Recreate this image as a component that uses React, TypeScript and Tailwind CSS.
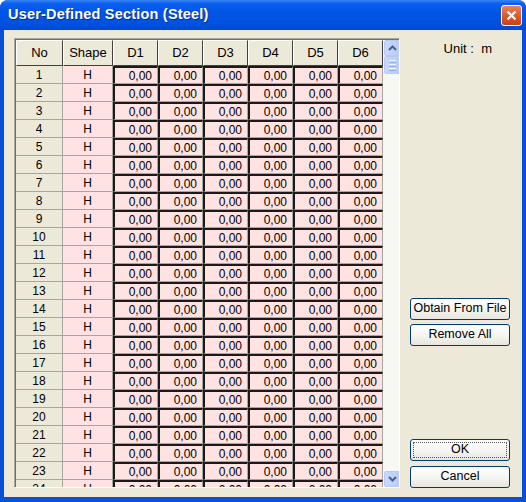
import React from "react";

const ROWS = Array.from({ length: 24 }, (_, i) => i + 1);
const D_COLS = ["D1", "D2", "D3", "D4", "D5", "D6"];

function HeaderCell({ label, w }: { label: string; w: string }) {
  return (
    <div
      className={`${w} h-[26px] shrink-0 flex items-center justify-center bg-[#ece9d8] border-t border-l border-t-white border-l-white border-r border-b border-r-[#404040] border-b-[#404040] text-[13px] text-black`}
    >
      {label}
    </div>
  );
}

function DataRow({ n }: { n: number }) {
  return (
    <div className="flex h-[18px] shrink-0">
      <div className="w-[47px] shrink-0 flex items-center justify-center bg-[#ece9d8] border-r border-b border-[#a7a69e] text-[12px]">
        {n}
      </div>
      <div className="w-[50px] shrink-0 flex items-center justify-center bg-[#ffe3e3] border-r border-b border-[#a7a69e] text-[12px]">
        H
      </div>
      {D_COLS.map((d) => (
        <div
          key={d}
          className="w-[45px] shrink-0 flex items-center justify-end pr-[5px] bg-[#ffe3e3] border-l-2 border-t-2 border-l-[#1a1a1a] border-t-[#1a1a1a] border-r border-b border-r-[#a7a69e] border-b-[#a7a69e] text-[12px]"
        >
          0,00
        </div>
      ))}
    </div>
  );
}

function ScrollButton({ dir }: { dir: "up" | "down" }) {
  return (
    <div className="w-[16px] h-[16px] rounded-[2px] border border-[#b7c8f5] bg-[linear-gradient(to_right,#c9d8fc,#b9cbf8)] flex items-center justify-center">
      <svg width="9" height="6" viewBox="0 0 9 6">
        <path
          d={dir === "up" ? "M1 5 L4.5 1.5 L8 5" : "M1 1 L4.5 4.5 L8 1"}
          fill="none"
          stroke="#4d6185"
          strokeWidth="2"
        />
      </svg>
    </div>
  );
}

function XpButton({ label, focus }: { label: string; focus?: boolean }) {
  return (
    <button
      type="button"
      className="w-[100px] h-[22px] rounded-[3px] border border-[#003c74] bg-[linear-gradient(to_bottom,#ffffff,#f3f3ef_60%,#e6e5de)] text-[12.5px] text-black whitespace-nowrap flex items-center justify-center p-[2px]"
    >
      <span
        className={`w-full h-full flex items-center justify-center ${
          focus ? "border border-dotted border-[#555]" : ""
        }`}
      >
        {label}
      </span>
    </button>
  );
}

export default function App() {
  return (
    <div
      className="w-[526px] h-[502px] flex flex-col bg-[#0a4fd8] rounded-t-[8px] overflow-hidden"
      style={{ fontFamily: '"Liberation Sans", Arial, sans-serif' }}
    >
      {/* title bar */}
      <div className="h-[30px] shrink-0 flex items-center justify-between pl-[8px] pr-[4px] bg-[linear-gradient(to_bottom,#3a86f5_0%,#0a5ff0_12%,#0055e5_40%,#0053e1_75%,#0048d6_100%)]">
        <span className="text-white font-bold text-[14.5px] tracking-[0.2px] [text-shadow:1px_1px_0_#0a2a8a]">
          User-Defined Section (Steel)
        </span>
        <div className="w-[21px] h-[21px] rounded-[3px] border border-white bg-[linear-gradient(to_bottom,#e8825c,#d9532c_60%,#c8401c)] flex items-center justify-center">
          <svg width="11" height="11" viewBox="0 0 11 11">
            <path d="M1.5 1.5 L9.5 9.5 M9.5 1.5 L1.5 9.5" stroke="white" strokeWidth="2.2" />
          </svg>
        </div>
      </div>

      {/* body */}
      <div className="flex-1 mx-[4px] mb-[5px] bg-[#ece9d8] flex pt-[8px] pl-[10px]">
        {/* grid */}
        <div className="w-[386px] h-[450px] shrink-0 border-t border-l border-t-[#aca899] border-l-[#aca899] border-b border-r border-b-white border-r-white">
          <div className="w-full h-full flex border-t border-l border-t-[#716f64] border-l-[#716f64] bg-[#ffffff] overflow-hidden">
            <div className="w-[367px] shrink-0 flex flex-col overflow-hidden">
              <div className="flex shrink-0">
                <HeaderCell label="No" w="w-[47px]" />
                <HeaderCell label="Shape" w="w-[50px]" />
                {D_COLS.map((d) => (
                  <HeaderCell key={d} label={d} w="w-[45px]" />
                ))}
              </div>
              {ROWS.map((n) => (
                <DataRow key={n} n={n} />
              ))}
            </div>
            {/* scrollbar */}
            <div className="w-[17px] shrink-0 flex flex-col justify-between items-end bg-[#f7f7f3]">
              <div className="flex flex-col">
                <ScrollButton dir="up" />
                <div className="w-[16px] h-[18px] rounded-[2px] border border-[#b7c8f5] bg-[linear-gradient(to_right,#c9d8fc,#b9cbf8)] flex flex-col items-center justify-center gap-[1px]">
                  <div className="w-[7px] h-[1px] bg-[#eef4fe]" />
                  <div className="w-[7px] h-[1px] bg-[#8cb0f8]" />
                  <div className="w-[7px] h-[1px] bg-[#eef4fe]" />
                  <div className="w-[7px] h-[1px] bg-[#8cb0f8]" />
                  <div className="w-[7px] h-[1px] bg-[#eef4fe]" />
                  <div className="w-[7px] h-[1px] bg-[#8cb0f8]" />
                </div>
              </div>
              <ScrollButton dir="down" />
            </div>
          </div>
        </div>

        {/* right panel */}
        <div className="flex-1 flex flex-col items-start pl-[10px] pt-[1px]">
          <div className="self-end mr-[30px] text-[13px] text-black">Unit :&nbsp; m</div>
          <div className="mt-[239px] flex flex-col gap-[4px]">
            <XpButton label="Obtain From File" />
            <XpButton label="Remove All" />
          </div>
          <div className="mt-[93px] flex flex-col gap-[5px]">
            <XpButton label="OK" focus />
            <XpButton label="Cancel" />
          </div>
        </div>
      </div>
    </div>
  );
}
